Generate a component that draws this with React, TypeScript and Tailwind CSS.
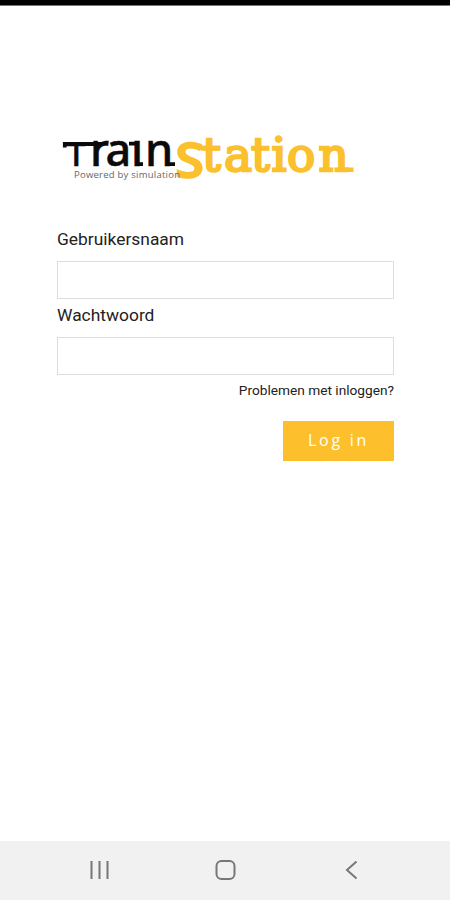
import { FC } from 'react';

const Logo: FC = () => (
  <svg
    viewBox="0 0 300 56"
    role="img"
    aria-label="TrainStation"
    className="-ml-0.5 block h-14 w-[300px] overflow-visible"
  >
    <g
      fill="#0b0b0b"
      stroke="#0b0b0b"
      strokeWidth="0.5"
      className="font-['Noto_Sans'] font-medium"
    >
      <text x="13" y="36" fontSize="33">
        T
      </text>
      <text x="36 51.5 77 91" y="36" fontSize="45">
        raın
      </text>
    </g>
    {/* bar that joins the T and the r, and the feet of the letters */}
    <path
      d="M10.8 17.5V14H50M75 13.6H83M82 34.2H89M112 34.2H121"
      fill="none"
      stroke="#0b0b0b"
      strokeWidth="3.8"
    />
    <g fill="#fbc02d" stroke="#fbc02d">
      <text
        x="121"
        y="48"
        fontSize="48"
        strokeWidth="1.4"
        textLength="29"
        lengthAdjust="spacingAndGlyphs"
        className="font-['Noto_Sans'] font-semibold"
      >
        S
      </text>
      <text
        x="148 170 197 217.5 233 264.5"
        y="41"
        fontSize="47"
        strokeWidth="2.4"
        className="font-['DejaVu_Serif']"
      >
        tation
      </text>
      {/* crossbar shared by the S and the t, and the tail of the n */}
      <path d="M143 18H166M288 39.8H299.5" fill="none" strokeWidth="4.4" />
    </g>
    <text
      x="20"
      y="48"
      fontSize="9.5"
      textLength="106"
      fill="#666"
      className="font-['Open_Sans']"
    >
      Powered by simulation
    </text>
  </svg>
);

const Field: FC<{ label: string; name: string; type?: string }> = ({
  label,
  name,
  type = 'text',
}) => (
  <label className="block">
    <span className="block h-[38px] pt-px text-[17.4px] leading-[30px]">
      {label}
    </span>
    <input
      name={name}
      type={type}
      className="block h-[38px] w-full border border-[#dedede] bg-white px-2 outline-none"
    />
  </label>
);

const NavigationBar: FC = () => (
  <nav className="flex h-[59px] items-center justify-between bg-[#f1f1f1] px-[87px] pb-0.5 text-[#777]">
    <button aria-label="Recents">
      <svg width="25" height="24" fill="none" stroke="currentColor" strokeWidth="2">
        <path d="M4.5 3V21M12.5 3V21M20.5 3V21" />
      </svg>
    </button>
    <button aria-label="Home">
      <svg width="25" height="24" fill="none" stroke="currentColor" strokeWidth="2">
        <rect x="3.5" y="3" width="18" height="18" rx="5" />
      </svg>
    </button>
    <button aria-label="Back">
      <svg width="25" height="24" fill="none" stroke="currentColor" strokeWidth="2">
        <path d="M18.5 3.5L9 12L18.5 20.5" />
      </svg>
    </button>
  </nav>
);

export default function App() {
  return (
    <div className="flex h-[900px] w-[450px] flex-col bg-white font-[Roboto,sans-serif] text-[#222]">
      <div className="h-[6px] border-b border-[#777] bg-black" />
      <main className="flex-1 px-14 pt-[124px]">
        <Logo />
        <form
          className="ml-px mt-[37px] w-[337px]"
          onSubmit={(e) => e.preventDefault()}
        >
          <Field label="Gebruikersnaam" name="username" />
          <Field label="Wachtwoord" name="password" type="password" />
          <div className="flex flex-col items-end">
            <a href="#" className="mt-[5px] text-[13.7px] leading-5">
              Problemen met inloggen?
            </a>
            <button className="mt-[21px] h-10 w-[111px] bg-[#fdc02c] pb-0.5 font-['Open_Sans'] text-base tracking-[2.7px] text-white">
              Log in
            </button>
          </div>
        </form>
      </main>
      <NavigationBar />
    </div>
  );
}
